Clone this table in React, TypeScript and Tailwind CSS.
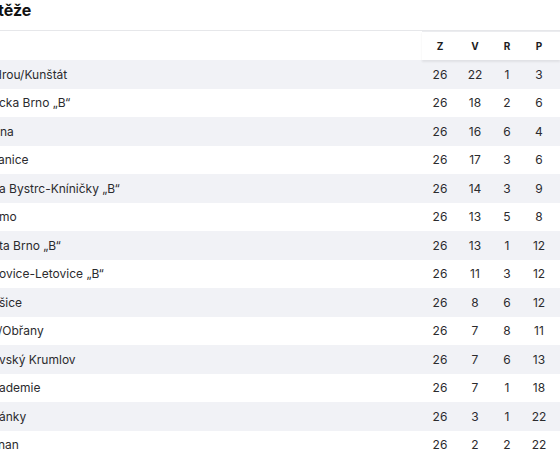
import React from "react";

type Row = { name: string; z: number; v: number; r: number; p: number; off: string };

const rows: Row[] = [
  { name: "Hrou/Kunštát", z: 26, v: 22, r: 1, p: 3, off: "-ml-[7px]" },
  { name: "cka Brno „B“", z: 26, v: 18, r: 2, p: 6, off: "-ml-[1px]" },
  { name: "na", z: 26, v: 16, r: 6, p: 4, off: "ml-0" },
  { name: "anice", z: 26, v: 17, r: 3, p: 6, off: "-ml-[2px]" },
  { name: "a Bystrc-Kníničky „B“", z: 26, v: 14, r: 3, p: 9, off: "-ml-[1px]" },
  { name: "mo", z: 26, v: 13, r: 5, p: 8, off: "-ml-[1px]" },
  { name: "ta Brno „B“", z: 26, v: 13, r: 1, p: 12, off: "-ml-[1px]" },
  { name: "ovice-Letovice „B“", z: 26, v: 11, r: 3, p: 12, off: "-ml-[1px]" },
  { name: "šice", z: 26, v: 8, r: 6, p: 12, off: "-ml-[1px]" },
  { name: "/Obřany", z: 26, v: 7, r: 8, p: 11, off: "-ml-[2px]" },
  { name: "vský Krumlov", z: 26, v: 7, r: 6, p: 13, off: "-ml-[1px]" },
  { name: "ademie", z: 26, v: 7, r: 1, p: 18, off: "-ml-[1px]" },
  { name: "ánky", z: 26, v: 3, r: 1, p: 22, off: "-ml-[1px]" },
  { name: "nan", z: 26, v: 2, r: 2, p: 22, off: "-ml-[2px]" },
];

function Nums({ z, v, r, p, head }: { z: React.ReactNode; v: React.ReactNode; r: React.ReactNode; p: React.ReactNode; head?: boolean }) {
  const base = head
    ? "text-center text-[10px] font-bold text-[#1d1d1f]"
    : "text-center text-[12px] text-[#2b2b2e]";
  return (
    <div className="flex shrink-0 w-[138px] items-center">
      <div className={`w-[36px] ${base}`}>{z}</div>
      <div className={`w-[34px] ${base}`}>{v}</div>
      <div className={`w-[30px] ${base}`}>{r}</div>
      <div className={`w-[34px] ${base}`}>{p}</div>
      <div className="w-[4px]" />
    </div>
  );
}

export default function App() {
  return (
    <div className="w-[560px] h-[460px] overflow-hidden bg-white font-['Inter',sans-serif] text-[#2b2b2e]">
      <div className="h-[31px] border-b border-[#e6e7ea] flex items-start">
        <div className="-ml-[2px] text-[16px] font-bold leading-[20px] text-[#111]">těže</div>
      </div>
      <div className="flex h-[29px]">
        <div className="flex-1" />
        <div className="shrink-0 w-[138px] bg-white shadow-[0_2px_2px_rgba(0,0,0,0.07)] border-t border-[#ebecef] flex items-center">
          <Nums head z="Z" v="V" r="R" p="P" />
        </div>
      </div>
      <div>
        {rows.map((row, i) => (
          <div
            key={i}
            className={`flex h-[28.5px] items-center pt-[1px] ${i % 2 === 0 ? "bg-[#f1f2f6]" : "bg-white"}`}
          >
            <div className="flex-1 min-w-0 overflow-hidden">
              <div className={`${row.off} whitespace-nowrap text-[12px] leading-[16px] text-[#2b2b2e]`}>{row.name}</div>
            </div>
            <Nums z={row.z} v={row.v} r={row.r} p={row.p} />
          </div>
        ))}
      </div>
    </div>
  );
}
